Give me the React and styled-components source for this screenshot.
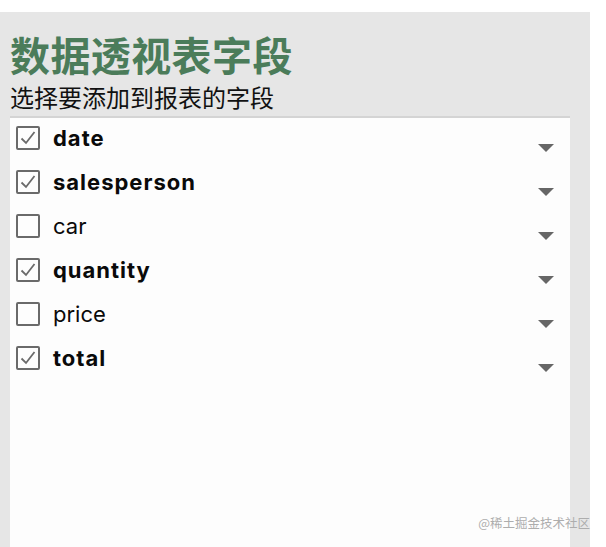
import React from 'react';
import styled, { createGlobalStyle } from 'styled-components';

const Global = createGlobalStyle`
  html, body { margin:0; padding:0; background:#fff; }
  body { font-family:Inter, "Noto Sans CJK SC", sans-serif; }
`;

const Page = styled.div`
  position:relative;
  width:606px;
  height:547px;
  overflow:hidden;
  padding-top:12px;
  box-sizing:border-box;
`;

const Panel = styled.div`
  width:590px;
  height:535px;
  background:#e6e6e6;
  padding:21px 0 0 10px;
  box-sizing:border-box;
  display:flex;
  flex-direction:column;
`;

const Title = styled.div`
  font-family:"Noto Sans CJK SC", sans-serif;
  font-size:40px;
  line-height:42px;
  font-weight:700;
  color:#4b7c5a;
  letter-spacing:0.4px;
`;

const Sub = styled.div`
  font-family:"Noto Sans CJK SC", sans-serif;
  font-size:24px;
  line-height:30px;
  color:#111;
  margin-top:7px;
`;

const List = styled.div`
  width:560px;
  flex:1;
  margin-top:4px;
  background:#fdfdfd;
  border-top:2px solid #d4d4d4;
  box-sizing:border-box;
`;

const Row = styled.div`
  height:44px;
  display:flex;
  align-items:center;
  padding:0 0 4px 6px;
  box-sizing:border-box;
`;

const Box = styled.div`
  width:20px;
  height:20px;
  border:2px solid #6a6a6a;
  border-radius:2px;
  display:flex;
  align-items:center;
  justify-content:center;
  flex-shrink:0;
`;

const Label = styled.span`
  margin-left:13px;
  font-size:22px;
  font-weight:${p => p.bold ? 700 : 400};
  letter-spacing:${p => p.bold ? '1px' : '0'};
  color:#0a0a0a;
  flex:1;
`;

const Arrow = styled.div`
  width:0;
  height:0;
  border-left:8px solid transparent;
  border-right:8px solid transparent;
  border-top:8px solid #666;
  margin:20px 16px 0 0;
`;

const Mark = styled.div`
  position:absolute;
  right:16px;
  bottom:15px;
  font-family:"Noto Sans CJK SC", sans-serif;
  font-size:12.5px;
  color:#adadad;
`;

const fields = [
  { name:'date', on:true },
  { name:'salesperson', on:true },
  { name:'car', on:false },
  { name:'quantity', on:true },
  { name:'price', on:false },
  { name:'total', on:true },
];

export default function App(){
  return (
    <Page>
      <Global />
      <Panel>
        <Title>数据透视表字段</Title>
        <Sub>选择要添加到报表的字段</Sub>
        <List>
          {fields.map(f => (
            <Row key={f.name}>
              <Box>
                {f.on &&
                  <svg width="18" height="18" viewBox="0 0 18 18">
                    <path d="M2.5 9.5 L7 14 L15.5 3" fill="none" stroke="#6a6a6a" strokeWidth="1.8" />
                  </svg>
                }
              </Box>
              <Label bold={f.on}>{f.name}</Label>
              <Arrow />
            </Row>
          ))}
        </List>
      </Panel>
      <Mark>@稀土掘金技术社区</Mark>
    </Page>
  );
}
